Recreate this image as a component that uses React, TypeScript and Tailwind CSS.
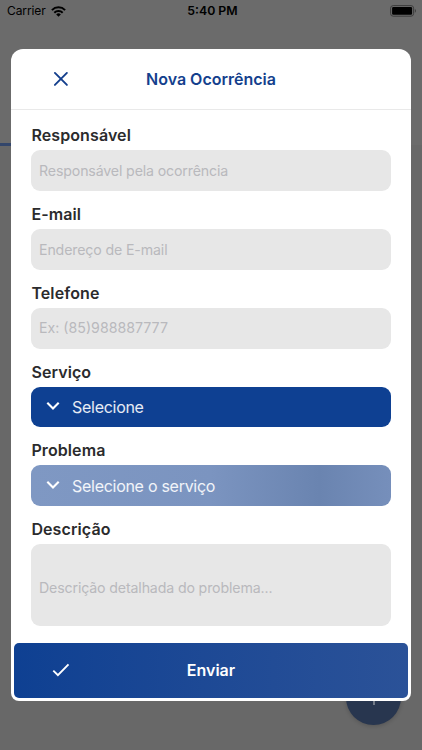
import React from 'react';
import clsx from 'clsx';

type Field = {
  label: string;
  text: string;
  kind: 'input' | 'select' | 'disabled' | 'textarea';
};

const fields: Field[] = [
  { label: 'Responsável', text: 'Responsável pela ocorrência', kind: 'input' },
  { label: 'E-mail', text: 'Endereço de E-mail', kind: 'input' },
  { label: 'Telefone', text: 'Ex: (85)988887777', kind: 'input' },
  { label: 'Serviço', text: 'Selecione', kind: 'select' },
  { label: 'Problema', text: 'Selecione o serviço', kind: 'disabled' },
  { label: 'Descrição', text: 'Descrição detalhada do problema...', kind: 'textarea' },
];

const StatusBar: React.FC = () => (
  <header className="grid h-[22px] grid-cols-3 items-center pl-[7px] pr-[5px] text-black">
    <div className="flex items-center gap-[5px]">
      <span className="text-[12px] leading-none tracking-[-0.1px]">Carrier</span>
      <svg width="15" height="11" viewBox="0 0 15 11" fill="none" stroke="currentColor" strokeWidth="2">
        <path d="M.9 4.1a9.3 9.3 0 0 1 13.2 0" />
        <path d="M3.3 6.7a5.9 5.9 0 0 1 8.4 0" />
        <path d="M5.2 8.5a3.2 3.2 0 0 1 4.6 0L7.5 10.8z" fill="currentColor" stroke="none" />
      </svg>
    </div>
    <span className="pl-[1px] text-center text-[12.3px] leading-none font-semibold">5:40 PM</span>
    <svg className="justify-self-end" width="27" height="12" viewBox="0 0 27 12">
      <rect x="0.6" y="0.6" width="23" height="10.6" rx="2.6" fill="none" stroke="#3c3c3c" />
      <rect x="2.1" y="2.1" width="20" height="7.6" rx="1.2" fill="#000" />
      <path d="M24.9 4.1c1.4.5 1.4 3.1 0 3.6z" fill="#3c3c3c" />
    </svg>
  </header>
);

const FormField: React.FC<{ field: Field }> = ({ field }) => {
  const isSelect = field.kind === 'select' || field.kind === 'disabled';

  return (
    <div>
      <div className="h-[22px] pl-[0.4px] text-[16px] leading-[22px] font-semibold tracking-[0.1px] text-[#2b2b2d]">
        {field.label}
      </div>
      <div
        className={clsx(
          'mt-[4px] flex items-center rounded-[9px]',
          field.kind === 'textarea' ? 'h-[81.5px] pt-[5px]' : 'h-[40.75px]',
          isSelect
            ? 'pl-[14.5px] text-[16px] tracking-[-0.28px]'
            : 'bg-[#e7e7e7] pl-[8px] text-[14.2px] text-[#b9b9bd]',
          !isSelect && field.label !== 'Telefone' && 'tracking-[-0.15px]',
          field.kind === 'select' && 'bg-[#0e4092] text-white/90',
          field.kind === 'disabled' &&
            'bg-[linear-gradient(90deg,#7f98c3_0%,#7b94c0_50%,#6a84b0_80%,#768fbb_100%)] text-white/90'
        )}
      >
        {isSelect && (
          <svg className="mr-[12.5px] mb-[1px]" width="14" height="10" viewBox="0 0 14 10" fill="none" stroke="#fff" strokeWidth="2.1">
            <path d="M1.3 1.8 7 7.5l5.7-5.7" />
          </svg>
        )}
        <span>{field.text}</span>
      </div>
    </div>
  );
};

const App: React.FC = () => {
  return (
    <div className="relative h-[750px] w-[422px] overflow-hidden bg-[#6b6b6b] font-['Inter',sans-serif]">
      <StatusBar />

      {/* dimmed screen behind the modal */}
      <div className="absolute inset-x-0 top-[145px] bottom-0 bg-[#686868]" />
      <div className="absolute top-[143px] left-0 h-[2.5px] w-[100px] bg-[#33466b]" />
      <div className="absolute top-[670px] left-[346px] flex size-[55px] items-center justify-center rounded-full bg-[#28364f] shadow-[0_1px_4px_rgba(0,0,0,0.2)]">
        <svg width="14" height="14" viewBox="0 0 14 14" stroke="#737b88" strokeWidth="2">
          <path d="M7 0v14M0 7h14" />
        </svg>
      </div>

      <main className="relative mx-[11px] mt-[27px] flex h-[652px] flex-col rounded-t-[12px] rounded-b-[8px] bg-white">
        <div className="grid h-[61px] grid-cols-[100px_1fr_100px] items-center border-b border-[#e9e9e9] text-[#143f8d]">
          <svg className="ml-[42px]" width="16" height="16" viewBox="0 0 16 16" fill="none" stroke="currentColor" strokeWidth="1.9" strokeLinecap="round">
            <path d="m1.9 1.9 12 12M13.9 1.9l-12 12" />
          </svg>
          <h1 className="text-center text-[16px] font-semibold whitespace-nowrap">Nova Ocorrência</h1>
        </div>

        <form className="flex flex-1 flex-col gap-[12px] px-[20px] pt-[14.25px]">
          {fields.map((field) => (
            <FormField key={field.label} field={field} />
          ))}
        </form>

        <button
          type="button"
          className="mx-[3px] mb-[3px] grid h-[55px] grid-cols-[100px_1fr_100px] items-center rounded-[5px] bg-linear-to-r from-[#0e4092] to-[#2b5298] pb-[1px] text-white"
        >
          <svg className="ml-[38px]" width="18" height="14" viewBox="0 0 18 14" fill="none" stroke="currentColor" strokeWidth="1.9">
            <path d="m1.3 7.6 4.6 4.5L16.5 1.4" />
          </svg>
          <span className="text-center text-[16px] font-semibold">Enviar</span>
        </button>
      </main>
    </div>
  );
};

export default App;
